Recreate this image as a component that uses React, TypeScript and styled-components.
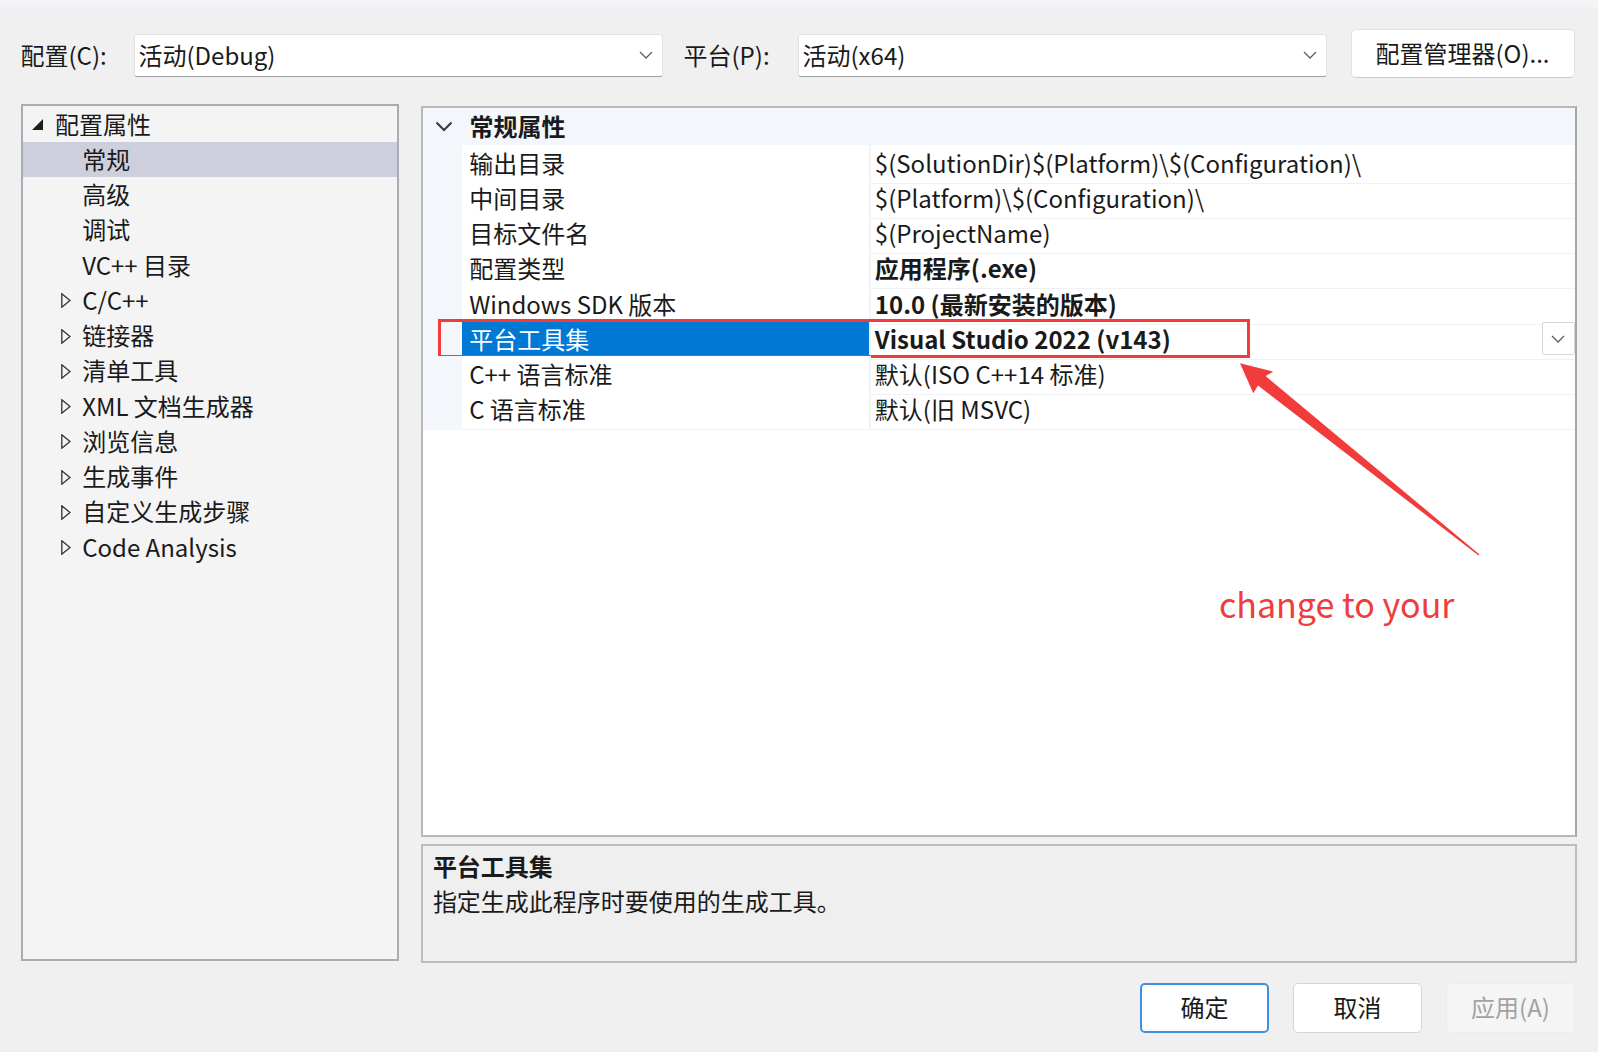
import React from 'react';
import styled, { createGlobalStyle } from 'styled-components';

const GlobalStyle = createGlobalStyle`
	html, body {
		margin: 0;
		padding: 0;
		background: #f0f0f0;
	}
	body {
		font-family: "Noto Sans CJK SC", "Microsoft YaHei", sans-serif;
		color: #1a1a1a;
	}
	* {
		box-sizing: border-box;
	}
`;

// 대화상자 전체
const Dialog = styled.div`
	position: relative;
	width: 1598px;
	height: 1052px;
	overflow: hidden;
	background: #f0f0f0;
	font-size: 24px;
`;

const TitleStrip = styled.div`
	height: 7px;
	background: #f4f3f8;
`;

const Body = styled.div`
	padding: 0 21px 0 20.5px;
`;

// 상단 구성/플랫폼 선택줄
const TopBar = styled.div`
	display: flex;
	align-items: center;
	height: 49px;
	margin-top: 22px;
`;

const FieldLabel = styled.label<{ $width: number; $offset?: number }>`
	width: ${(p) => p.$width}px;
	margin-left: ${(p) => p.$offset ?? 0}px;
	line-height: 43px;
	margin-top: 2px;
	white-space: nowrap;
`;

const Combo = styled.div`
	width: 529px;
	height: 43px;
	margin-top: 4px;
	display: flex;
	align-items: center;
	justify-content: space-between;
	padding: 0 9px 2px 4px;
	background: #fff;
	border: 1px solid #e2e2e2;
	border-bottom-color: #a0a0a0;
	border-radius: 3px;
`;

const ManagerButton = styled.button`
	width: 224px;
	height: 49px;
	margin-left: 24px;
	background: #fff;
	border: 1px solid #e0e0e0;
	border-bottom-color: #cacaca;
	border-radius: 5px;
	font: inherit;
	color: #1a1a1a;
	padding: 0 0 2px;
`;

const Main = styled.div`
	display: flex;
	align-items: flex-start;
	gap: 21.5px;
	margin-top: 26px;
`;

// 왼쪽 트리
const Tree = styled.div`
	width: 379px;
	height: 857px;
	background: #f4f4f4;
	border: 2px solid #a9adb3;
	padding-top: 0.5px;
`;

const TreeRow = styled.div<{ $indent: number; $selected?: boolean }>`
	display: flex;
	align-items: center;
	height: 35.25px;
	padding-left: ${(p) => p.$indent}px;
	background: ${(p) => (p.$selected ? '#cdd0dc' : 'transparent')};
	white-space: nowrap;
`;

const ToggleSlot = styled.span<{ $width: number }>`
	display: flex;
	align-items: center;
	width: ${(p) => p.$width}px;
	flex-shrink: 0;
	padding-top: 1px;
`;

const RowText = styled.span`
	margin-top: -2px;
`;

const RightColumn = styled.div`
	display: flex;
	flex-direction: column;
	gap: 7px;
	width: 1156.5px;
	margin-top: 2px;
`;

// 속성 표
const Grid = styled.div`
	height: 731px;
	background: #fff;
	border: 2px solid #b9b9b9;
	border-right: 2.5px solid #a6a6a6;
`;

const GridHeader = styled.div`
	display: grid;
	grid-template-columns: 38.7px 1fr;
	align-items: center;
	height: 36.5px;
	background: #f3f6fb;
	font-weight: 700;
`;

const HeaderToggle = styled.span`
	display: flex;
	padding-left: 12px;
`;

const HeaderText = styled.span`
	padding-left: 8px;
	margin-top: -2px;
`;

const PropRow = styled.div`
	position: relative;
	display: grid;
	grid-template-columns: 38.7px 407.3px 1fr;
	height: 35.25px;
`;

const Gutter = styled.div`
	background: #f3f6fb;
`;

const NameCell = styled.div<{ $selected?: boolean }>`
	display: flex;
	align-items: center;
	padding: 0 0 3px 7.6px;
	background: ${(p) => (p.$selected ? '#0078d4' : '#fff')};
	color: ${(p) => (p.$selected ? '#fff' : '#1a1a1a')};
	border-bottom: 1.5px solid ${(p) => (p.$selected ? '#0078d4' : '#eff1f6')};
	white-space: nowrap;
`;

const ValueCell = styled.div<{ $bold?: boolean }>`
	display: flex;
	align-items: center;
	justify-content: space-between;
	padding-left: 4px;
	border-left: 2px solid #f0f2f7;
	border-bottom: 1.5px solid #eff1f6;
	font-weight: ${(p) => (p.$bold ? 700 : 400)};
	white-space: nowrap;
`;

const ValueText = styled.span`
	margin-top: -3px;
`;

const DropButton = styled.span`
	display: flex;
	align-items: center;
	justify-content: center;
	width: 33.5px;
	height: 32.5px;
	align-self: flex-start;
	margin-top: 1.5px;
	background: #fff;
	border: 1px solid #d6d6d6;
	border-radius: 2px;
`;

const Highlight = styled.div`
	position: absolute;
	left: 15.3px;
	top: -2px;
	width: 811.7px;
	height: 39.4px;
	border: 3.5px solid #f23c3c;
	pointer-events: none;
`;

// 설명 영역
const Description = styled.div`
	height: 119px;
	padding: 2px 10px 0;
	background: #efefef;
	border: 2px solid #bdbdbd;
	line-height: 35px;
`;

const DescTitle = styled.div`
	font-weight: 700;
`;

const Footer = styled.div`
	display: flex;
	justify-content: flex-end;
	gap: 24px;
	margin-top: 20px;
	padding-right: 2px;
`;

const DialogButton = styled.button<{ $variant: 'primary' | 'normal' | 'disabled' }>`
	width: 129px;
	height: 50px;
	padding: 0 0 3px;
	font: inherit;
	border-radius: 5px;
	background: ${(p) => (p.$variant === 'disabled' ? '#f5f5f5' : '#fff')};
	color: ${(p) => (p.$variant === 'disabled' ? '#a2a2a2' : '#1a1a1a')};
	border: ${(p) =>
		p.$variant === 'primary'
			? '2px solid #3f8fdf'
			: p.$variant === 'normal'
			? '1.5px solid #d6d6d6'
			: '1px solid #ececec'};
`;

// 주석(빨간 화살표와 글)
const ArrowMark = styled.svg`
	position: absolute;
	left: 1235px;
	top: 358px;
	pointer-events: none;
`;

const Note = styled.div`
	position: absolute;
	left: 1219px;
	top: 580px;
	font-size: 34px;
	line-height: 48px;
	color: #f03c3c;
	white-space: nowrap;
`;

const ComboChevron = () => (
	<svg width="14" height="8" viewBox="0 0 14 8">
		<path d="M1 1 L7 7 L13 1" fill="none" stroke="#5f5f5f" strokeWidth="1.3" />
	</svg>
);

const HeaderChevron = () => (
	<svg width="18" height="11" viewBox="0 0 18 11">
		<path d="M1.5 1.5 L9 9 L16.5 1.5" fill="none" stroke="#3a3a3a" strokeWidth="2" />
	</svg>
);

const ExpandedIcon = () => (
	<svg width="11" height="11" viewBox="0 0 11 11">
		<polygon points="11,0 11,11 0,11" fill="#1e1e1e" />
	</svg>
);

const CollapsedIcon = () => (
	<svg width="10" height="15" viewBox="0 0 10 15">
		<polygon points="0.8,0.8 9,7.5 0.8,14.2" fill="none" stroke="#333" strokeWidth="1.3" />
	</svg>
);

type TreeItem = { label: string; kind: 'root' | 'leaf' | 'branch'; selected?: boolean };

const treeItems: TreeItem[] = [
	{ label: '配置属性', kind: 'root' },
	{ label: '常规', kind: 'leaf', selected: true },
	{ label: '高级', kind: 'leaf' },
	{ label: '调试', kind: 'leaf' },
	{ label: 'VC++ 目录', kind: 'leaf' },
	{ label: 'C/C++', kind: 'branch' },
	{ label: '链接器', kind: 'branch' },
	{ label: '清单工具', kind: 'branch' },
	{ label: 'XML 文档生成器', kind: 'branch' },
	{ label: '浏览信息', kind: 'branch' },
	{ label: '生成事件', kind: 'branch' },
	{ label: '自定义生成步骤', kind: 'branch' },
	{ label: 'Code Analysis', kind: 'branch' },
];

type Prop = { name: string; value: string; bold?: boolean; selected?: boolean };

const props: Prop[] = [
	{ name: '输出目录', value: '$(SolutionDir)$(Platform)\\$(Configuration)\\' },
	{ name: '中间目录', value: '$(Platform)\\$(Configuration)\\' },
	{ name: '目标文件名', value: '$(ProjectName)' },
	{ name: '配置类型', value: '应用程序(.exe)', bold: true },
	{ name: 'Windows SDK 版本', value: '10.0 (最新安装的版本)', bold: true },
	{ name: '平台工具集', value: 'Visual Studio 2022 (v143)', bold: true, selected: true },
	{ name: 'C++ 语言标准', value: '默认(ISO C++14 标准)' },
	{ name: 'C 语言标准', value: '默认(旧 MSVC)' },
];

function App() {
	return (
		<Dialog>
			<GlobalStyle />
			<TitleStrip />
			<Body>
				<TopBar>
					<FieldLabel $width={113}>配置(C):</FieldLabel>
					<Combo>
						<span>活动(Debug)</span>
						<ComboChevron />
					</Combo>
					<FieldLabel $width={114} $offset={21}>
						平台(P):
					</FieldLabel>
					<Combo>
						<span>活动(x64)</span>
						<ComboChevron />
					</Combo>
					<ManagerButton>配置管理器(O)...</ManagerButton>
				</TopBar>

				<Main>
					<Tree>
						{treeItems.map((item) => (
							<TreeRow
								key={item.label}
								$indent={item.kind === 'root' ? 9.5 : 38.5}
								$selected={item.selected}
							>
								<ToggleSlot $width={item.kind === 'root' ? 23 : 21.2}>
									{item.kind === 'root' && <ExpandedIcon />}
									{item.kind === 'branch' && <CollapsedIcon />}
								</ToggleSlot>
								<RowText>{item.label}</RowText>
							</TreeRow>
						))}
					</Tree>

					<RightColumn>
						<Grid>
							<GridHeader>
								<HeaderToggle>
									<HeaderChevron />
								</HeaderToggle>
								<HeaderText>常规属性</HeaderText>
							</GridHeader>
							{props.map((p) => (
								<PropRow key={p.name}>
									<Gutter />
									<NameCell $selected={p.selected}>{p.name}</NameCell>
									<ValueCell $bold={p.bold}>
										<ValueText>{p.value}</ValueText>
										{p.selected && (
											<DropButton>
												<ComboChevron />
											</DropButton>
										)}
									</ValueCell>
									{p.selected && <Highlight />}
								</PropRow>
							))}
						</Grid>
						<Description>
							<DescTitle>平台工具集</DescTitle>
							<div>指定生成此程序时要使用的生成工具。</div>
						</Description>
					</RightColumn>
				</Main>

				<Footer>
					<DialogButton $variant="primary">确定</DialogButton>
					<DialogButton $variant="normal">取消</DialogButton>
					<DialogButton $variant="disabled">应用(A)</DialogButton>
				</Footer>
			</Body>

			<ArrowMark width="250" height="202" viewBox="0 0 250 202">
				<polygon
					points="5,5.3 38.3,13.7 30.6,18.1 244.5,196.5 243.5,197.5 23,27.5 18.3,35.3"
					fill="#f23c3c"
				/>
			</ArrowMark>
			<Note>change to your</Note>
		</Dialog>
	);
}

export default App;
